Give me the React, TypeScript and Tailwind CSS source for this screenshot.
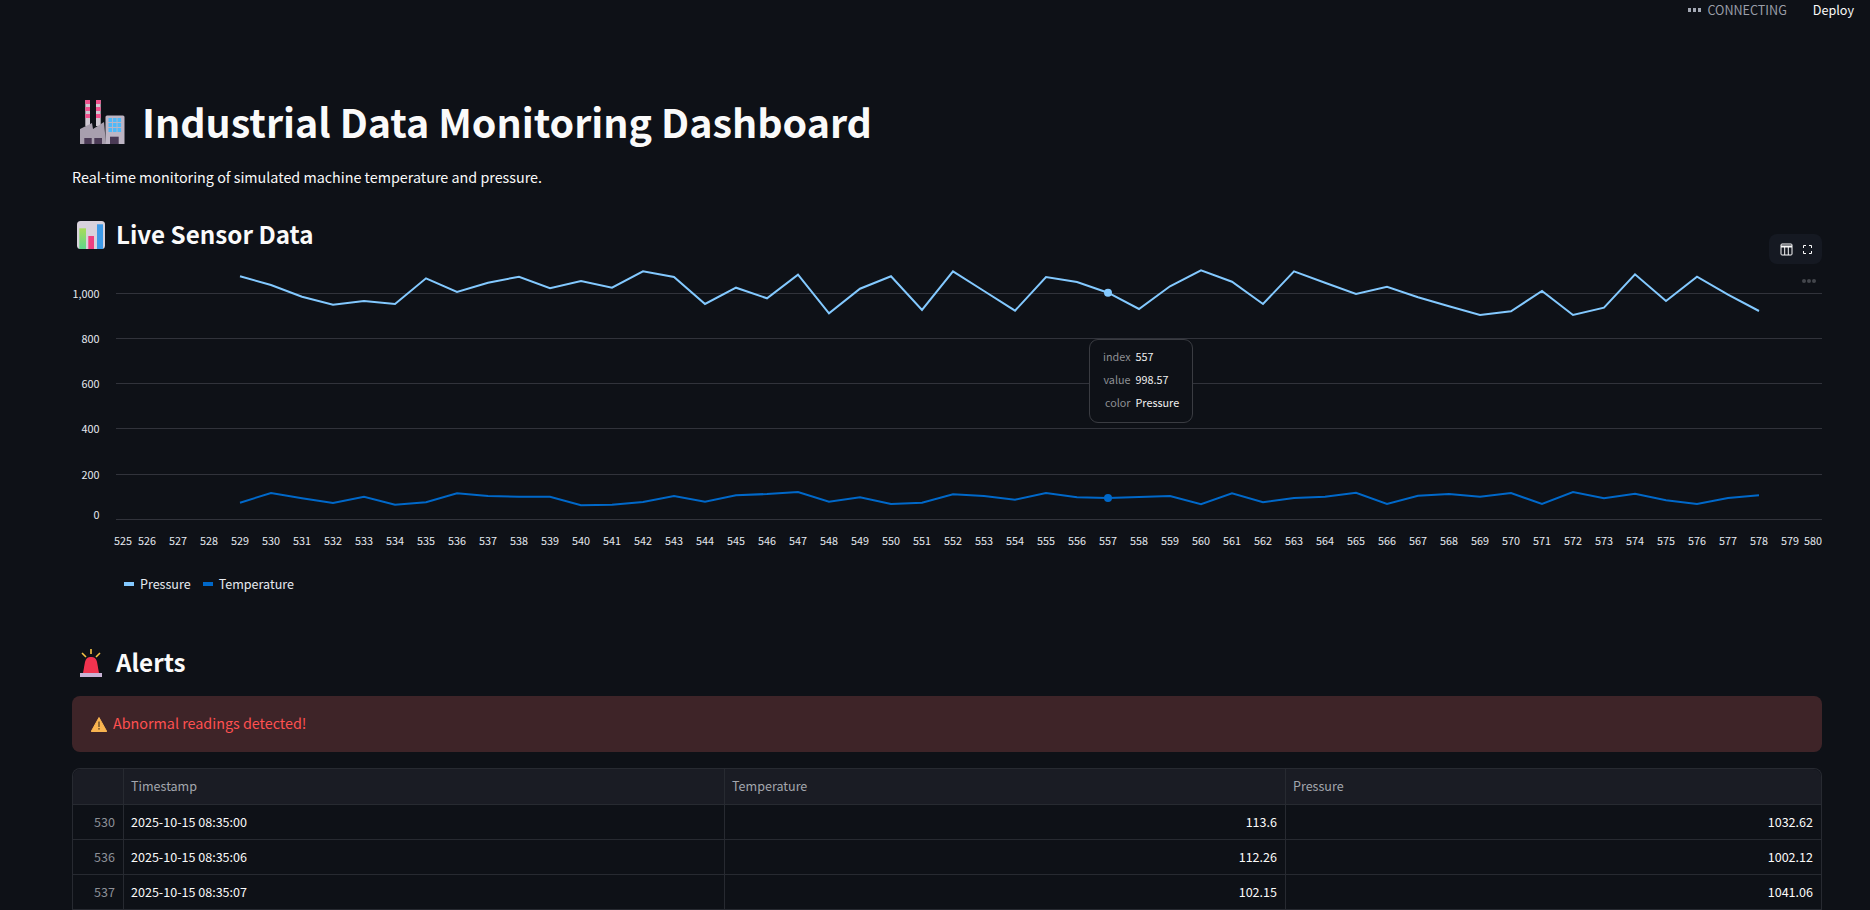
const pressure = [139,165,200,224,213,222,145,186,158,140,175,153,173,124,141,222,173,205,134,250,176,139,240,124,183,242,141,156,188,237,169,121,155,222,124,158,192,170,202,229,255,244,183,255,233,133,213,140,194,243];
const temperature = [818,789,805,819,800,824,817,790,798,800,800,826,824,816,798,815,796,792,786,815,802,822,818,793,798,809,789,802,804,801,798,823,790,817,804,800,788,822,797,792,800,789,822,786,805,791,811,822,804,796];

const px = (i: number) => 240 + i * 31;
const toLine = (arr: number[]) => arr.map((v, i) => `${px(i)},${(230 + v / 3).toFixed(1)}`).join(" ");
const ticks = [[123, 525], [147, 526]] as [number, number][];
for (let n = 527; n <= 578; n++) ticks.push([240 + (n - 529) * 31, n]);
ticks.push([1790, 579], [1813, 580]);
const grid = [[293.5, "1,000", 0], [338.5, "800", 0], [383.5, "600", 0], [428.5, "400", 0], [474.5, "200", 0], [519.5, "0", -5]] as [number, string, number][];

function Factory() {
  return (
    <svg width="45" height="44" viewBox="0 0 45 44" className="shrink-0">
      <rect x="5.3" y="0" width="4.7" height="26" fill="#cfc8d2" />
      <rect x="16" y="0" width="4.7" height="26" fill="#cfc8d2" />
      {[0, 7, 14].map((y) => (
        <g key={y}>
          <rect x="5.3" y={y} width="4.7" height="4" fill="#f0508c" />
          <rect x="16" y={y} width="4.7" height="4" fill="#f0508c" />
        </g>
      ))}
      <path d="M0 44V29L12 23L13 29L24 22L26 44Z" fill="#a89fae" />
      <path d="M25.5 17Q25.5 15.5 27 15.5H43Q44.5 15.5 44.5 17V44H25.5Z" fill="#bdb5c4" />
      {[18, 23, 28].map((y) =>
        [28.5, 33, 37.5].map((x) => <rect key={`${x}-${y}`} x={x} y={y} width="3.6" height="4" fill="#4fb9f8" />),
      )}
      <rect x="4.3" y="38" width="7.4" height="6" fill="#4a3a55" />
      <rect x="14.3" y="38" width="7.7" height="6" fill="#4a3a55" />
      <rect x="30" y="36.7" width="8.7" height="7.3" fill="#4a3a55" />
    </svg>
  );
}

function ChartEmoji() {
  return (
    <svg width="28" height="28" viewBox="0 0 28 28" className="shrink-0">
      <defs>
        <linearGradient id="gr" x1="0" y1="0" x2="0" y2="1">
          <stop offset="0" stopColor="#a8dc58" />
          <stop offset="1" stopColor="#5fd68c" />
        </linearGradient>
      </defs>
      <rect x="0" y="0" width="28" height="28" rx="3.5" fill="#d8d2dc" />
      <rect x="2.3" y="7.3" width="6.7" height="20.7" fill="url(#gr)" />
      <rect x="11.3" y="15" width="5.7" height="13" fill="#ee3f80" />
      <rect x="20" y="3.3" width="6" height="24.7" fill="#3d9ae8" />
    </svg>
  );
}

function Siren() {
  return (
    <svg width="22" height="28" viewBox="0 0 22 28" className="shrink-0">
      <path d="M11 0V5M2 4L6 8M20 4L16 8" stroke="#f6c344" strokeWidth="1.6" />
      <path d="M3 24L5 13C6 9 8 8 11 8C14 8 16 9 17 13L19 24Z" fill="#f0334f" />
      <rect x="0" y="24" width="22" height="4" fill="#c9b3d6" />
    </svg>
  );
}

function Warn() {
  return (
    <svg width="16" height="15" viewBox="0 0 16 15" className="shrink-0">
      <path d="M8 0.5L15.8 14.5H0.2Z" fill="#f9b450" stroke="#f9b450" strokeLinejoin="round" />
      <rect x="7.2" y="4.5" width="1.6" height="5.5" fill="#7a5a30" />
      <rect x="7.2" y="11" width="1.6" height="1.6" fill="#7a5a30" />
    </svg>
  );
}

const rows = [
  ["530", "2025-10-15 08:35:00", "113.6", "1032.62"],
  ["536", "2025-10-15 08:35:06", "112.26", "1002.12"],
  ["537", "2025-10-15 08:35:07", "102.15", "1041.06"],
];

const cell = "flex items-center h-[35px] px-2 border-b border-r border-[#272a31] text-[12.55px]";

export default function App() {
  return (
    <div
      className="h-screen overflow-hidden bg-[#0e1117] text-[#fafafa]"
      style={{ fontFamily: '"Noto Sans CJK SC", "Noto Sans", sans-serif' }}
    >
      <header className="flex h-5 items-center justify-end pr-4 text-[12.6px]">
        <div className="flex gap-[2px]">
          <span className="h-[4px] w-[3px] bg-[#a3a8b4]" />
          <span className="h-[4px] w-[3px] bg-[#a3a8b4]" />
          <span className="h-[4px] w-[3px] bg-[#a3a8b4]" />
        </div>
        <span className="ml-[6px] text-[#9a9ea8]">CONNECTING</span>
        <span className="ml-[26px]">Deploy</span>
      </header>

      <main className="pl-[72px] pr-[48px]">
        <h1 className="mt-[72px] flex h-[60px] items-center pl-2 text-[39.4px] font-bold leading-[60px]">
          <Factory />
          <span className="ml-[17px] whitespace-nowrap pb-[2px]">Industrial Data Monitoring Dashboard</span>
        </h1>
        <p className="mt-[14px] h-6 text-[14.33px] leading-[22px]">Real-time monitoring of simulated machine temperature and pressure.</p>
        <h2 className="mt-[25px] flex h-10 items-center pl-[5px] text-[24.2px] font-semibold leading-[38px]">
          <ChartEmoji />
          <span className="ml-[11px] pb-[2px]">Live Sensor Data</span>
        </h2>

        <div className="relative">
          <div className="absolute -top-[21px] right-0 flex h-[30px] w-[53px] items-center justify-center gap-[10px] rounded-lg bg-[#151922]">
            <svg width="13" height="13" viewBox="0 0 13 13" fill="none" stroke="#fafafa">
              <rect x="1" y="1" width="11" height="11" rx="1" strokeWidth="1" />
              <path d="M1 3.5H12" strokeWidth="2" />
              <path d="M4.7 4V12M8.3 4V12" strokeWidth="1" />
            </svg>
            <svg width="9" height="9" viewBox="0 0 9 9" fill="none" stroke="#fafafa" strokeWidth="1">
              <path d="M0.5 3V0.5H3M6 0.5H8.5V3M8.5 6V8.5H6M3 8.5H0.5V6" />
            </svg>
          </div>
          <div className="absolute right-[6px] top-[24px] flex gap-[1px]">
            <span className="size-[4px] rounded-full bg-[#43464c]" />
            <span className="size-[4px] rounded-full bg-[#43464c]" />
            <span className="size-[4px] rounded-full bg-[#43464c]" />
          </div>

          <svg width="1750" height="310" viewBox="72 255 1750 310" className="block">
            {grid.map(([y, label, dy]) => (
              <g key={label}>
                <line x1="116" x2="1822" y1={y} y2={y} stroke="#31333b" strokeWidth="1" />
                <text x="99.5" y={y + 4 + dy} textAnchor="end" fontSize="10.8" fill="#e6eaf1">
                  {label}
                </text>
              </g>
            ))}
            <polyline points={toLine(pressure)} fill="none" stroke="#83c9ff" strokeWidth="2" />
            <polyline points={toLine(temperature)} fill="none" stroke="#0068c9" strokeWidth="2" />
            <circle cx="1108" cy="292.7" r="4" fill="#83c9ff" />
            <circle cx="1108" cy="498" r="4" fill="#0068c9" />
            {ticks.map(([x, n]) => (
              <text key={n} x={x} y="545" textAnchor="middle" fontSize="10.8" fill="#e6eaf1">
                {n}
              </text>
            ))}
          </svg>

          <div className="absolute left-[1017px] top-[84px] grid h-[84px] w-[104px] grid-cols-[auto_1fr] content-center gap-x-[5px] gap-y-[6px] rounded-[9px] border border-[#3a3c42] bg-[#0e1117] pb-1 pl-[13px] text-[10.8px] leading-[17px]">
            <span className="text-right text-[#8d8f94]">index</span>
            <span className="text-[#f0f0f0]">557</span>
            <span className="text-right text-[#8d8f94]">value</span>
            <span className="text-[#f0f0f0]">998.57</span>
            <span className="text-right text-[#8d8f94]">color</span>
            <span className="text-[#f0f0f0]">Pressure</span>
          </div>
        </div>

        <div className="flex h-[38px] items-center pl-[52px] text-[12.55px] text-[#e6eaf1]">
          <span className="h-1 w-[10px] bg-[#83c9ff]" />
          <span className="ml-[6px]">Pressure</span>
          <span className="ml-3 h-1 w-[10px] bg-[#0068c9]" />
          <span className="ml-[6px]">Temperature</span>
        </div>

        <h2 className="mt-[40px] flex h-10 items-center pl-2 text-[24.2px] font-semibold leading-[38px]">
          <Siren />
          <span className="ml-[14px] pb-[2px]">Alerts</span>
        </h2>

        <div className="mt-[13px] flex h-14 items-center gap-[6px] rounded-lg bg-[#3e2428] pl-[19px] text-[14.33px] text-[#ff5050]">
          <Warn />
          <span className="pb-[2px]">Abnormal readings detected!</span>
        </div>

        <div className="mt-4 grid grid-cols-[51px_601px_561px_1fr] rounded-t-lg border border-b-0 border-[#272a31]">
          <div className={`${cell} h-[36px] rounded-tl-lg bg-[#1a1c24]`} />
          <div className={`${cell} h-[36px] bg-[#1a1c24] pl-[7px] text-[#a3a6ad]`}>Timestamp</div>
          <div className={`${cell} h-[36px] bg-[#1a1c24] pl-[7px] text-[#a3a6ad]`}>Temperature</div>
          <div className={`${cell} h-[36px] rounded-tr-lg border-r-0 bg-[#1a1c24] pl-[7px] text-[#a3a6ad]`}>Pressure</div>
          {rows.map((r) => (
            <div key={r[0]} className="contents">
              <div className={`${cell} justify-end text-[#8d9097]`}>{r[0]}</div>
              <div className={`${cell} pl-[7px]`}>{r[1]}</div>
              <div className={`${cell} justify-end`}>{r[2]}</div>
              <div className={`${cell} justify-end border-r-0`}>{r[3]}</div>
            </div>
          ))}
        </div>
      </main>
    </div>
  );
}
